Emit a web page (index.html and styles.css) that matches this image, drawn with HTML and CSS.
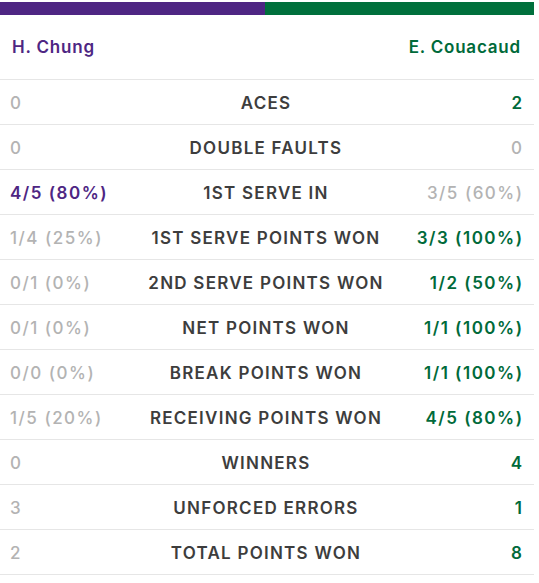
FILE: index.html
```html
<!DOCTYPE html>
<html lang="en">
<head>
<meta charset="utf-8">
<title>Match stats</title>
<link rel="stylesheet" href="styles.css">
</head>
<body>
<div class="stats">
  <div class="bar">
    <div class="bar-p1" style="width: 49.7%"></div>
    <div class="bar-p2"></div>
  </div>
  <div class="header">
    <span class="name p1">H. Chung</span>
    <span class="name p2">E. Couacaud</span>
  </div>
  <div class="row"><span class="v">0</span><span class="label">ACES</span><span class="v p2">2</span></div>
  <div class="row"><span class="v">0</span><span class="label">DOUBLE FAULTS</span><span class="v">0</span></div>
  <div class="row"><span class="v p1">4/5 (80%)</span><span class="label">1ST SERVE IN</span><span class="v">3/5 (60%)</span></div>
  <div class="row"><span class="v">1/4 (25%)</span><span class="label">1ST SERVE POINTS WON</span><span class="v p2">3/3 (100%)</span></div>
  <div class="row"><span class="v">0/1 (0%)</span><span class="label">2ND SERVE POINTS WON</span><span class="v p2">1/2 (50%)</span></div>
  <div class="row"><span class="v">0/1 (0%)</span><span class="label">NET POINTS WON</span><span class="v p2">1/1 (100%)</span></div>
  <div class="row"><span class="v">0/0 (0%)</span><span class="label">BREAK POINTS WON</span><span class="v p2">1/1 (100%)</span></div>
  <div class="row"><span class="v">1/5 (20%)</span><span class="label">RECEIVING POINTS WON</span><span class="v p2">4/5 (80%)</span></div>
  <div class="row"><span class="v">0</span><span class="label">WINNERS</span><span class="v p2">4</span></div>
  <div class="row"><span class="v">3</span><span class="label">UNFORCED ERRORS</span><span class="v p2">1</span></div>
  <div class="row"><span class="v">2</span><span class="label">TOTAL POINTS WON</span><span class="v p2">8</span></div>
</div>
</body>
</html>
```
FILE: styles.css
```css
html, body {
  margin: 0;
  padding: 0;
  background: #ffffff;
}
body {
  font-family: Inter, "Open Sans", sans-serif;
}
.stats {
  width: 534px;
  padding-top: 2px;
}
.bar {
  display: flex;
  height: 13px;
}
.bar-p1 {
  background: #4e2683;
}
.bar-p2 {
  flex: 1;
  background: #00703c;
}
.header {
  display: flex;
  justify-content: space-between;
  align-items: center;
  height: 64px;
  padding: 0 13px 0 12px;
  border-bottom: 1px solid #e6e6e6;
}
.name {
  font-size: 17px;
  font-weight: 600;
  letter-spacing: 0.8px;
}
.p1 { color: #4e2683; }
.p2 { color: #006a3a; }
.row {
  display: grid;
  grid-template-columns: 1fr auto 1fr;
  align-items: center;
  height: 42px;
  padding: 2px 12px 0 10px;
  border-bottom: 1px solid #e6e6e6;
  font-size: 17px;
}
.v {
  color: #b3b3b3;
  font-weight: 500;
  letter-spacing: 1.5px;
}
.v:last-child {
  text-align: right;
  margin-right: -1.5px;
}
.v.p1 {
  color: #4e2683;
  font-weight: 600;
}
.v.p2 {
  color: #006a3a;
  font-weight: 600;
}
.label {
  color: #3d3d3d;
  font-weight: 600;
  letter-spacing: 1.25px;
  text-align: center;
}
```
